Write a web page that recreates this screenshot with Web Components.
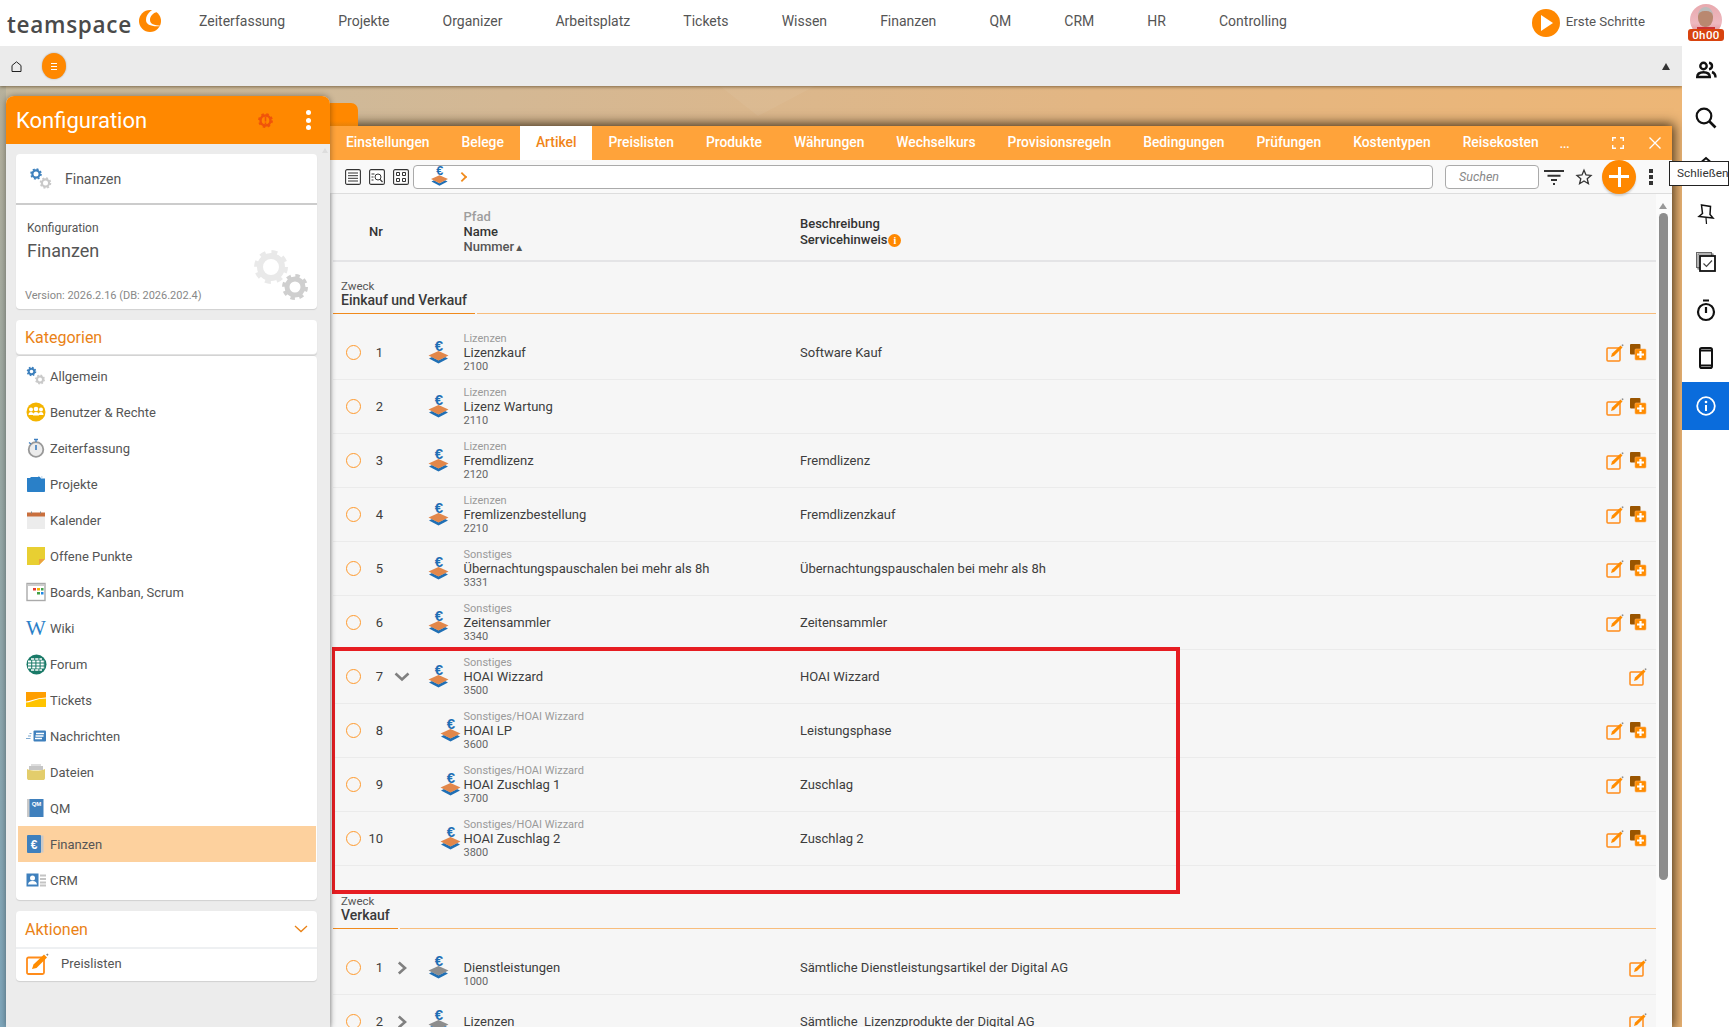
<!DOCTYPE html>
<html lang="de">
<head>
<meta charset="utf-8">
<title>teamspace</title>
<style>
html, body { margin: 0; height: 100%; overflow: hidden; background: #fff; font-family: Roboto, "Liberation Sans", sans-serif; }
</style>
</head>
<body>
<ts-app></ts-app>

<script>
// ring plus eight even teeth
const gear = (cx, cy, r, col, w) => {
  const R = r + w * 0.62, d = (2 * Math.PI * R / 16).toFixed(2);
  return `<circle cx="${cx}" cy="${cy}" r="${r}" fill="none" stroke="${col}" stroke-width="${w}"/>` +
    `<circle cx="${cx}" cy="${cy}" r="${R}" fill="none" stroke="${col}" stroke-width="${w * 0.75}" stroke-dasharray="${d} ${d}"/>`;
};
const euroStack = (mid) => `<text x="10.8" y="10" text-anchor="middle" font-family="Liberation Sans" font-weight="700" font-size="15" fill="#1f6fb5">€</text>
  <path d="M1 17.5l3-1.6 6.500 3.400 6.500-3.400 3 1.600-9.500 5z" fill="#1f6fb5"/>
  <path d="M.5 14.500l10-4.500 10 4.500-10 5z" fill="${mid}"/>`;

const ICONS = {
  euro: [21, 23, euroStack("#e2874a")],
  euroGrey: [21, 23, euroStack("#8d8d8d")],
  edit: [18, 18, `<rect x="1" y="4" width="13" height="13" rx="1" fill="none" stroke="#ff8c1a" stroke-width="1.500"/>
    <path d="M5 13l1-3.500L14.500 1.500l2 2L8 12z" fill="#ff8c00"/><path d="M15.300 1l1.500-.8.800.8-.8 1.500z" fill="#888"/>`],
  copy: [17, 16, `<rect x="0" y="0" width="10.500" height="10.500" rx="1" fill="#9a5500"/><rect x="5" y="5" width="11" height="11" rx="1" fill="#ff8c00" stroke="#ffb060" stroke-width=".6"/>
    <path d="M10.500 7v7M7 10.500h7" stroke="#fff" stroke-width="2.200"/>`],
  chevDown: [16, 10, `<path d="M1.500 1.500L8 7.500l6.500-6" fill="none" stroke="#808080" stroke-width="2.600"/>`],
  chevRight: [10, 14, `<path d="M1.800 1.500L8 7l-6.200 5.500" fill="none" stroke="#808080" stroke-width="2.600"/>`],
  gearsHead: [24, 24, gear(7, 7, 3.6, "#3d80bd", 2.2) + gear(16.5, 16, 3.6, "#c9c9c9", 2.2)],
  gearsCol: [20, 20, gear(5.5, 5.5, 2.8, "#3d80bd", 2) + gear(14, 13.5, 3, "#c9c9c9", 2)],
  gearsBig: [60, 56, gear(17, 20, 11, "#e9e9e9", 6) + gear(41, 40, 8, "#cfcfcf", 5)],
  warn: [17, 17, gear(8.5, 8.5, 5, "#f0540a", 2.4) + `<path d="M8.500 5v4.500M8.500 10.500v1.800" stroke="#f0540a" stroke-width="1.600"/>`],
  users: [20, 20, `<circle cx="10" cy="10" r="9.500" fill="#f4b400"/><g fill="#fff"><circle cx="5" cy="7.500" r="2"/><circle cx="15" cy="7.500" r="2"/><circle cx="10" cy="7" r="2.300"/><path d="M2.500 13c0-2 1-3 2.500-3s2.500 1 2.500 3zM12.500 13c0-2 1-3 2.500-3s2.500 1 2.500 3zM7 13.500c0-2.500 1.200-3.500 3-3.500s3 1 3 3.500z"/></g>`],
  watch: [20, 20, `<circle cx="10" cy="11.500" r="7.300" fill="#ececec" stroke="#999" stroke-width="1.800"/><path d="M10 7v5" stroke="#3f7fc0" stroke-width="1.600"/><path d="M8 1.500h4M10 1.500v2.500M3 4.500l2 1.500" stroke="#3f7fc0" stroke-width="1.300"/>`],
  folder: [20, 20, `<path d="M1 17V4h3l1-1h9l1 1.500h4V17c0 .6-.4 1-1 1H2c-.6 0-1-.4-1-1z" fill="#2a80c8"/><path d="M12 2.500h1.500M15 3h1.500" stroke="#a8c8e4"/>`],
  calendar: [20, 20, `<rect x="1" y="5" width="18" height="14" fill="#ececec"/><rect x="1" y="2.500" width="18" height="4" fill="#c96f3d"/><path d="M5.500 1.500v2M14.500 1.500v2" stroke="#888"/>`],
  note: [20, 20, `<path d="M1 1h18v12l-6 6H1z" fill="#e8cf32"/><path d="M13 19v-6h6z" fill="#eda240"/>`],
  board: [20, 20, `<rect x="1" y="1.500" width="18" height="17" fill="#fff" stroke="#aaa" stroke-width="1.400"/><rect x="1.500" y="2" width="17" height="2" fill="#ccc"/><rect x="7" y="6" width="3" height="2.500" fill="#e53935"/><rect x="11" y="6" width="3" height="2.500" fill="#f4b400"/><rect x="15" y="6" width="2.500" height="2.500" fill="#43a047"/><rect x="11" y="10" width="3" height="2.500" fill="#43a047"/><rect x="15" y="10" width="2.500" height="2.500" fill="#1e88e5"/>`],
  wiki: [20, 20, `<text x="10" y="16.500" text-anchor="middle" font-family="Liberation Serif" font-size="21" fill="#2a80c8">W</text>`],
  forum: [21, 21, `<circle cx="10.500" cy="10.500" r="10" fill="#1a7a68"/><path d="M2 7.500h17M2 13.500h17" stroke="#fff" stroke-width="1.800" stroke-dasharray="3.200 1"/><path d="M2 10.500h17" stroke="#fff" stroke-width="1.800" stroke-dasharray="3.200 1"/><path d="M5 5h11M5 16h11" stroke="#fff" stroke-width="1.500" stroke-dasharray="3.200 1"/>`],
  tickets: [20, 16, `<rect y="0" width="20" height="15" fill="#ff9e00"/><path d="M0 10c6 0 8-4 20-4v9H0z" fill="#ffc400"/><path d="M0 10c6 0 8-4 20-4" fill="none" stroke="#fff" stroke-width="1.200"/>`],
  news: [20, 12, `<rect x="7.500" y=".5" width="12.500" height="11" rx="1" fill="#3f80bd"/><path d="M10 3.500h8M9.500 6h8M9 8.500h7" stroke="#fff" stroke-width="1.300"/><path d="M3.500 3.500h2M2 6h3M0 8.500h4.500" stroke="#7fa9d0" stroke-width="1.200"/>`],
  files: [20, 18, `<path d="M3 3h14v4H3z" fill="#c6c6c6"/><path d="M5 1h10v2H5z" fill="#dedede"/><path d="M1 6c4 2 14 2 18 0v9c0 1.500-1 2-2 2H3c-1 0-2-.5-2-2z" fill="#e3cd6b"/>`],
  qm: [18, 20, `<rect x="1" y="1" width="4" height="18" fill="#c9c9c9"/><rect x="3.500" y="1" width="14" height="18" fill="#3f80bd"/><text x="10.500" y="8" text-anchor="middle" font-family="Liberation Sans" font-weight="700" font-size="6" fill="#fff">QM</text>`],
  fin: [18, 20, `<rect x="13" y="1.500" width="4.500" height="17" fill="#c9c9c9"/><rect x="1" y="1" width="14" height="18" rx="1" fill="#3f80bd"/><text x="8" y="14.500" text-anchor="middle" font-family="Liberation Sans" font-weight="700" font-size="12" fill="#fff">€</text>`],
  crm: [20, 14, `<rect x=".5" y=".5" width="12" height="13" fill="#3f80bd"/><circle cx="6.500" cy="5" r="2.500" fill="#fff"/><path d="M2 11.500c.5-3 2.500-3.500 4.500-3.500s4 .5 4.500 3.500z" fill="#fff"/><path d="M14 2.500h6M14 6h6M14 9.500h6M14 12.500h6" stroke="#c4c4c4" stroke-width="2"/>`],
  bigEdit: [24, 22, `<rect x="1" y="4.500" width="17" height="16.500" rx="1.500" fill="none" stroke="#ff8c1a" stroke-width="1.800"/><path d="M6 16l1.500-4.500L18 1.500l3 3L10.500 15z" fill="#ff8c00"/><path d="M20 1.500l1.500-1 1 1-1 1.500z" fill="#888"/>`],
  tList: [16, 16, `<rect x=".6" y=".6" width="14.800" height="14.800" rx="1.500" fill="#fff" stroke="#333" stroke-width="1.100"/><path d="M3 4h10M3 6.700h10M3 9.300h10M3 12h10" stroke="#333"/>`],
  tSearch: [16, 16, `<rect x=".6" y=".6" width="14.800" height="14.800" rx="1.500" fill="#fff" stroke="#333" stroke-width="1.100"/><path d="M2.500 5h3M2.500 8h2M2.500 11h2" stroke="#333"/><circle cx="9" cy="8" r="3" fill="none" stroke="#333"/><path d="M11 10.300l2.500 2.700" stroke="#333" stroke-width="1.200"/>`],
  tGrid: [16, 16, `<rect x=".6" y=".6" width="14.800" height="14.800" rx="1.500" fill="#fff" stroke="#333" stroke-width="1.100"/><path d="M3.500 3.500h3v3h-3zM9.500 3.500h3v3h-3zM3.500 9.500h3v3h-3zM9.500 9.500h3v3h-3z" fill="none" stroke="#333"/>`],
  filter: [20, 16, `<path d="M0 2h20M3.500 6.700h13M7 11h6" stroke="#333" stroke-width="2"/><path d="M9 15h2" stroke="#333" stroke-width="2"/>`],
  star: [16, 16, `<path d="M8 1.200l2 4.800 5 .4-3.800 3.300 1.200 5L8 12l-4.400 2.700 1.200-5L1 6.400 6 6z" fill="none" stroke="#333" stroke-width="1.300"/>`],
  fullscreen: [12, 12, `<path d="M.7 4V.7H4M8 .7h3.300V4M11.300 8v3.300H8M4 11.300H.7V8" fill="none" stroke="#fff" stroke-width="1.400"/>`],
  close: [12, 12, `<path d="M.5.5l11 11M11.500.5l-11 11" stroke="#fff" stroke-width="1.300"/>`],
  home: [11, 11, `<path d="M1 10.500V4.500L5.500.8 10 4.500v6z" fill="none" stroke="#222" stroke-width="1"/>`],
  logo: [24, 23, `<circle cx="12" cy="12" r="11" fill="#ff8800"/><path d="M17 0c-4 1-9 5-9 11 0 5 6 7 15 6-7-1-11-2-11-6 0-4 3-7 7-8l2-3z" fill="#fff"/>`],
  sPeople: [20, 18, `<circle cx="7.500" cy="5" r="3.200" fill="none" stroke="#111" stroke-width="2.400"/><path d="M1.200 16c0-3.500 3-4.800 6.300-4.800s6.300 1.300 6.300 4.800z" fill="none" stroke="#111" stroke-width="2.400"/><path d="M13 1.800c2 .3 3 1.700 3 3.200s-1 2.900-3 3.200M16 11c2 .7 3.500 2 3.500 5.500" fill="none" stroke="#111" stroke-width="2.400"/>`],
  sSearch: [22, 22, `<circle cx="9" cy="9" r="7.300" fill="none" stroke="#111" stroke-width="2.200"/><path d="M14.500 14.500l6 6" stroke="#111" stroke-width="2.600"/>`],
  sHome: [20, 20, `<path d="M2 18V9l8-7 8 7v9z" fill="none" stroke="#111" stroke-width="2"/>`],
  sPin: [16, 21, `<path d="M3.500 1l9 1.500-.5 8 3 3.500L1 12.500l3.500-3z" fill="none" stroke="#111" stroke-width="1.500"/><path d="M8 14l.5 6" stroke="#111" stroke-width="1.200"/>`],
  sCheck: [20, 20, `<rect x=".5" y=".5" width="15" height="15" fill="none" stroke="#666"/><rect x="2" y="2" width="15" height="15" fill="none" stroke="#666"/><rect x="4" y="4" width="15" height="15" fill="#fff" stroke="#111" stroke-width="1.800"/><path d="M7.500 11.500l3 3 5.500-6" fill="none" stroke="#444" stroke-width="1.200"/>`],
  sTimer: [20, 22, `<circle cx="10" cy="13" r="8" fill="none" stroke="#111" stroke-width="2.200"/><path d="M10 8v6M7 1.500h6" stroke="#111" stroke-width="2.200"/>`],
  sPhone: [14, 22, `<rect x="1" y="1" width="12" height="20" rx="1.800" fill="none" stroke="#111" stroke-width="2"/><path d="M1 3.500h12M1 18.500h12" stroke="#111" stroke-width="2"/>`],
  sInfo: [20, 20, `<circle cx="10" cy="10" r="8.800" fill="none" stroke="#fff" stroke-width="1.800"/><circle cx="10" cy="6" r="1.300" fill="#fff"/><path d="M10 9v6" stroke="#fff" stroke-width="2"/>`]
};

class TsIcon extends HTMLElement {
  connectedCallback() {
    if (this.shadowRoot) return;
    const [w, h, body] = ICONS[this.getAttribute("name")];
    this.attachShadow({ mode: "open" }).innerHTML =
      `<style>:host{display:inline-flex;flex:none}svg{display:block;overflow:visible}</style><svg width="${w}" height="${h}" viewBox="0 0 ${w} ${h}">${body}</svg>`;
  }
}

class TsTopbar extends HTMLElement {
  constructor() {
    super();
    const nav = ["Zeiterfassung", "Projekte", "Organizer", "Arbeitsplatz", "Tickets", "Wissen", "Finanzen", "QM", "CRM", "HR", "Controlling"];
    this.attachShadow({ mode: "open" }).innerHTML = `<style>
      :host { display: flex; align-items: center; height: 46px; background: #fff; color: #555; font-size: 14px; position: relative; z-index: 5; }
      .logo { display: flex; align-items: center; width: 199px; flex: none; padding-left: 7px; box-sizing: border-box; }
      .logo b { font: 600 22.500px "Open Sans", sans-serif; color: #4a4a4a; letter-spacing: .7px; margin-top: 2px; }
      .logo ts-icon { margin: -6px 0 0 6px; }
      nav { display: flex; gap: 53.050px; flex: none; margin-top: -4px; }
      .go { margin-left: auto; display: flex; align-items: center; gap: 6px; margin-right: 38px; font-size: 13.300px; }
      .play { width: 28px; height: 28px; background: #ff8800; border-radius: 50%; display: flex; align-items: center; justify-content: center; }
      .play i { border-left: 12px solid #fff; border-top: 8px solid transparent; border-bottom: 8px solid transparent; margin-left: 3px; }
      .go span { margin-top: -4px; }
      .go .play { margin-top: 0; }
      .me { width: 46px; flex: none; position: relative; height: 46px; }
      .face { position: absolute; left: 7px; top: 4px; width: 32px; height: 32px; border-radius: 50%; background: linear-gradient(180deg,#e8a9ae 0,#eeb8bf 60%,#d98a90 100%); overflow: hidden; }
      .face i { position: absolute; left: 8px; top: 3px; width: 15px; height: 20px; border-radius: 45%; background: #b98870; border-top: 4px solid #bbb; box-sizing: border-box; }
      .face u { position: absolute; left: 7px; bottom: 0; width: 18px; height: 9px; background: #c33; }
      .bad { position: absolute; left: 5px; top: 29px; width: 36px; height: 12px; background: #d8430f; color: #fff; font-size: 11.500px; font-weight: 500; line-height: 12px; text-align: center; border-radius: 3px; letter-spacing: .4px; }
    </style>
    <div class="logo"><b>teamspace</b><ts-icon name="logo"></ts-icon></div>
    <nav>${nav.map(n => `<span>${n}</span>`).join("")}</nav>
    <div class="go"><span class="play"><i></i></span><span>Erste Schritte</span></div>
    <div class="me"><div class="face"><i></i><u></u></div><div class="bad">0h00</div></div>`;
  }
}

class TsSubbar extends HTMLElement {
  constructor() {
    super();
    this.attachShadow({ mode: "open" }).innerHTML = `<style>
      :host { display: flex; align-items: center; height: 40px; background: #ebebeb; box-shadow: 0 1px 3px rgba(60,40,10,.55); position: relative; z-index: 1; flex: none; }
      ts-icon { margin-left: 11px; }
      .menu { margin-left: 20px; width: 24px; height: 26px; border-radius: 50%; background: #ff8800; box-shadow: 0 0 2px rgba(0,0,0,.3); display: flex; flex-direction: column; gap: 2px; align-items: center; justify-content: center; }
      .menu i { width: 6.500px; height: 1px; background: #fff; }
      .up { margin-left: auto; margin-right: 12px; border-left: 4px solid transparent; border-right: 4px solid transparent; border-bottom: 7px solid #333; }
    </style><ts-icon name="home"></ts-icon><div class="menu"><i></i><i></i><i></i></div><div class="up"></div>`;
  }
}

class TsRail extends HTMLElement {
  constructor() {
    super();
    const items = ["sPeople", "sSearch", "sHome", "sPin", "sCheck", "sTimer", "sPhone", "sInfo"];
    this.attachShadow({ mode: "open" }).innerHTML = `<style>
      :host { display: flex; flex-direction: column; width: 47px; flex: none; background: #fff; position: relative; z-index: 4; }
      div { height: 48px; display: flex; align-items: center; justify-content: center; }
      div:last-of-type { background: #0a6cdc; }
      .tip { position: absolute; left: -13px; top: 115px; width: 60px; height: 25px; box-sizing: border-box; background: #fff; border: 1px solid #222; font-size: 11.800px; color: #333; line-height: 23px; padding-left: 7px; white-space: nowrap; display: block; }
    </style>${items.map(n => `<div><ts-icon name="${n}"></ts-icon></div>`).join("")}<span class="tip">Schließen</span>`;
  }
}

class TsCategory extends HTMLElement {
  constructor() {
    super();
    this.attachShadow({ mode: "open" }).innerHTML = `<style>
      :host { display: flex; align-items: center; height: 36px; padding-left: 8px; font-size: 13px; color: #555; margin: 0 1px 0 2px; }
      :host([active]) { background: #fdd19e; }
      .ic { width: 24px; height: 24px; flex: none; display: flex; align-items: center; }
    </style><span class="ic"><ts-icon name="${this.getAttribute("icon")}"></ts-icon></span><slot></slot>`;
  }
}

class TsConfig extends HTMLElement {
  constructor() {
    super();
    this.attachShadow({ mode: "open" }).innerHTML = `<style>
      :host { display: block; width: 324px; flex: none; background: #ececec; position: relative; z-index: 3; margin-top: 10px; border-radius: 8px 8px 0 0; box-shadow: 0 0 6px rgba(0,0,0,.4); color: #555; }
      header { height: 48px; background: #ff8800; border-radius: 8px 8px 0 0; color: #fff; font-size: 22px; display: flex; align-items: center; padding-left: 10px; }
      header ts-icon { margin-left: auto; margin-right: 32px; }
      .dots { display: flex; flex-direction: column; gap: 2.500px; margin-right: 19px; }
      .dots i { width: 5px; height: 5px; background: #fff; border-radius: 50%; }
      .scrolly { position: absolute; left: 316px; top: 52px; border-left: 3px solid transparent; border-right: 3px solid transparent; border-bottom: 5px solid #ddd; }
      .card { background: #fff; margin: 0 13px 0 10px; border-radius: 4px; box-shadow: 0 1px 1px rgba(0,0,0,.12); position: relative; }
      .c1 { margin-top: 10px; height: 155px; }
      .fin { height: 49px; border-bottom: 2px solid #ccc; display: flex; align-items: center; font-size: 14px; padding-left: 13px; gap: 12px; }
      .fin ts-icon { margin-top: 1px; }
      .k1 { position: absolute; left: 11px; top: 67px; font-size: 12px; color: #555; }
      .k2 { position: absolute; left: 11px; top: 86px; font-size: 18px; }
      .v { position: absolute; left: 9px; top: 135px; font-size: 11px; color: #888; }
      .big { position: absolute; left: 238px; top: 93px; }
      .c2 { margin-top: 11px; height: 35px; font-size: 16px; color: #ea8216; display: flex; align-items: center; padding-left: 9px; border-bottom: 1px solid #e2e2e2; box-sizing: border-box; }
      .c3 { margin-top: 1px; height: 544px; padding-top: 2px; box-sizing: border-box; }
      .c4 { margin-top: 11px; height: 70px; }
      .ah { height: 36px; font-size: 16px; color: #ea8216; display: flex; align-items: center; justify-content: space-between; padding: 0 9px; border-bottom: 2px solid #eef0f2; }
      .ai { display: flex; align-items: center; font-size: 13px; height: 29px; padding-left: 10px; gap: 11px; }
    </style>
    <header>Konfiguration<ts-icon name="warn"></ts-icon><span class="dots"><i></i><i></i><i></i></span></header>
    <div class="scrolly"></div>
    <div class="card c1">
      <div class="fin"><ts-icon name="gearsHead"></ts-icon>Finanzen</div>
      <div class="k1">Konfiguration</div><div class="k2">Finanzen</div>
      <div class="v">Version: 2026.2.16 (DB: 2026.202.4)</div>
      <ts-icon class="big" name="gearsBig"></ts-icon>
    </div>
    <div class="card c2">Kategorien</div>
    <div class="card c3"><slot></slot></div>
    <div class="card c4">
      <div class="ah">Aktionen<svg width="14" height="8" viewBox="0 0 14 8"><path d="M1 1l6 5.500L13 1" fill="none" stroke="#ea8216" stroke-width="1.300"/></svg></div>
      <div class="ai"><ts-icon name="bigEdit"></ts-icon><span>Preislisten</span></div>
    </div>`;
  }
}

class TsSection extends HTMLElement {
  constructor() {
    super();
    this.attachShadow({ mode: "open" }).innerHTML = `<style>
      :host { display: block; padding-bottom: 10px; }
      .head { display: flex; padding-top: 18px; margin-bottom: 12px; }
      :host(:first-child) .head { padding-top: 17px; }
      .lab { padding: 0 8px 6px 8px; border-bottom: 1px solid #f08a1c; }
      .z { font-size: 11.500px; line-height: 14px; color: #555; }
      .t { font-size: 14px; line-height: 14px; font-weight: 500; color: #3a3a3a; white-space: nowrap; }
      .fill { flex: 1; margin-left: 2px; border-bottom: 1px solid #f8bd7c; }
    </style>
    <div class="head"><div class="lab"><div class="z">Zweck</div><div class="t"></div></div><div class="fill"></div></div>
    <slot></slot>`;
    this.shadowRoot.querySelector(".t").textContent = this.getAttribute("title");
  }
}

class TsRow extends HTMLElement {
  constructor() {
    super();
    const a = n => this.getAttribute(n) || "";
    const chev = a("chev") ? `<ts-icon name="${a("chev") === "down" ? "chevDown" : "chevRight"}"></ts-icon>` : "";
    const noCopy = this.hasAttribute("nocopy");
    this.attachShadow({ mode: "open" }).innerHTML = `<style>
      :host { display: grid; grid-template-columns: 16px 38px 14px 50.500px 336.500px 1fr auto; height: 54px; box-sizing: border-box; padding: 0 8px 0 12px; align-items: center; border-bottom: 1px solid #ebebeb; font-size: 13px; color: #3d3d3d; }
      .radio { width: 15px; height: 15px; box-sizing: border-box; border: 1.500px solid #ff9a2e; border-radius: 50%; margin-left: .5px; }
      .nr { text-align: right; padding-right: 16px; }
      .ch { display: flex; justify-content: center; margin-left: ${a("chev") === "down" ? "-8px" : "-9px"}; }
      .ic { padding-left: ${this.hasAttribute("sub") ? 27 : 15}px; display: flex; }
      .txt { line-height: 14px; }
      .p { height: 14px; font-size: 11px; color: #9a9a9a; white-space: nowrap; }
      .n { height: 14px; white-space: nowrap; }
      .c { height: 14px; font-size: 11px; color: #666; }
      .acts { display: flex; gap: 6px; align-items: center; margin-top: 1px; margin-right: ${noCopy ? 1 : 1}px; }
      .acts ts-icon[name=copy] { margin-top: -2px; }
    </style>
    <span class="radio"></span><span class="nr">${a("nr")}</span><span class="ch">${chev}</span>
    <span class="ic"><ts-icon name="${a("grey") ? "euroGrey" : "euro"}"></ts-icon></span>
    <div class="txt"><div class="p"><slot name="path"></slot></div><div class="n"><slot name="name"></slot></div><div class="c"><slot name="num"></slot></div></div>
    <div><slot name="desc"></slot></div>
    <div class="acts"><ts-icon name="edit"></ts-icon>${noCopy ? "" : '<ts-icon name="copy"></ts-icon>'}</div>`;
  }
}

class TsWindow extends HTMLElement {
  constructor() {
    super();
    const tabs = ["Einstellungen", "Belege", "Artikel", "Preislisten", "Produkte", "Währungen", "Wechselkurs", "Provisionsregeln", "Bedingungen", "Prüfungen", "Kostentypen", "Reisekosten"];
    this.attachShadow({ mode: "open" }).innerHTML = `<style>
      :host { display: flex; flex-direction: column; flex: 1; min-width: 0; margin-top: 40px; background: #f6f6f6; position: relative; z-index: 2; box-shadow: 0 0 11px 2px rgba(40,25,5,.85); }
      .behind { position: absolute; left: -6px; top: -23px; width: 34px; height: 30px; background: linear-gradient(#ff8800 60%,#c87a16); border-radius: 0 7px 0 0; z-index: -1; }
      .tabs { display: flex; height: 34px; background: #ffa33a; flex: none; font-size: 13.830px; font-weight: 500; color: #fff; align-items: stretch; }
      .tabs span { padding: 0 16px 2px; display: flex; align-items: center; }
      .tabs span.on { background: #fff; color: #f08518; }
      .tabs span.more { padding-left: 5px; padding-top: 3px; font-size: 12px; }
      .tabs .ws { margin-left: auto; display: flex; align-items: center; gap: 25px; padding-right: 11px; }
      .bar { display: flex; align-items: center; height: 34px; flex: none; box-sizing: border-box; background: #f9f9f9; border-bottom: 1px solid #ddd; padding: 0 0 0 15px; position: relative; z-index: 1; }
      .bar .t { margin-right: 8px; }
      .path { margin-left: -4px; width: 1020px; height: 24px; box-sizing: border-box; flex: none; background: #fff; border: 1px solid #aaa; border-radius: 4px; display: flex; align-items: center; padding-left: 15px; }
      .path ts-icon { transform: scale(.85); }
      .path i { margin-left: 8px; width: 6px; height: 6px; border-top: 2px solid #f08a1c; border-right: 2px solid #f08a1c; transform: rotate(45deg) scale(.9); }
      .srch { margin-left: 12px; width: 94px; height: 24px; box-sizing: border-box; background: #fff; border: 1px solid #aaa; border-radius: 4px; font-size: 12.500px; font-style: italic; color: #888; line-height: 22px; padding-left: 13px; flex: none; }
      .bar ts-icon[name=filter] { margin-left: 5px; }
      .bar ts-icon[name=star] { margin-left: 12px; }
      .plus { width: 34px; height: 34px; margin-left: 10px; border-radius: 50%; background: #ff8800; box-shadow: 0 2px 2px rgba(0,0,0,.15); position: relative; flex: none; }
      .plus::before, .plus::after { content: ""; position: absolute; background: #fff; }
      .plus::before { left: 7px; right: 7px; top: 15.500px; height: 3px; }
      .plus::after { top: 7px; bottom: 7px; left: 15.500px; width: 3px; }
      .vd { display: flex; flex-direction: column; gap: 2px; margin-left: 13px; }
      .vd i { width: 4px; height: 4px; background: #333; }
      .body { flex: 1; display: flex; min-height: 0; position: relative; }
      .list { flex: 1; min-width: 0; overflow: hidden; padding-left: 3px; background: linear-gradient(90deg,#d8d8d8,#f6f6f6 3px) 0 0/3px 100% no-repeat; }
      .head { display: grid; grid-template-columns: 94.500px 336.500px 1fr; height: 68px; box-sizing: border-box; align-items: center; padding: 9px 0 0 36px; border-bottom: 2px solid #e4e4e6; font-size: 13px; font-weight: 500; color: #333; }
      .head > div { line-height: 15px; }
      .head .g { color: #9e9e9e; } .head .m { color: #555; }
      .head .d { line-height: 16px; }
      .head small { font-size: 10px; }
      .hint { display: inline-block; width: 13px; height: 13px; border-radius: 50%; background: #ff8800; color: #fff; font: 700 10px/13px "Liberation Serif", serif; text-align: center; margin-left: 1px; }
      .sb { width: 16px; flex: none; background: #fbfbfb; position: relative; }
      .sb i { position: absolute; left: 3px; top: 19px; width: 9px; height: 667px; background: #8c8c8c; border-radius: 5px; }
      .sb b { position: absolute; left: 3px; top: 9px; border-left: 4.500px solid transparent; border-right: 4.500px solid transparent; border-bottom: 6px solid #999; }
      .red { position: absolute; left: 2px; top: 521px; width: 848px; height: 247px; box-sizing: border-box; border: 4px solid #e61d22; border-left-width: 3px; pointer-events: none; z-index: 2; }
    </style>
    <div class="behind"></div>
    <div class="tabs">${tabs.map(t => `<span class="${t === "Artikel" ? "on" : ""}">${t}</span>`).join("")}<span class="more">...</span><div class="ws"><ts-icon name="fullscreen"></ts-icon><ts-icon name="close"></ts-icon></div></div>
    <div class="bar">
      <ts-icon class="t" name="tList"></ts-icon><ts-icon class="t" name="tSearch"></ts-icon><ts-icon class="t" name="tGrid"></ts-icon>
      <div class="path"><ts-icon name="euro"></ts-icon><i></i></div>
      <div class="srch">Suchen</div>
      <ts-icon name="filter"></ts-icon><ts-icon name="star"></ts-icon>
      <div class="plus"></div>
      <div class="vd"><i></i><i></i><i></i></div>
    </div>
    <div class="body">
      <div class="list">
        <div class="head">
          <div>Nr</div>
          <div><div class="g">Pfad</div><div>Name</div><div class="m">Nummer<small>▲</small></div></div>
          <div class="d"><div>Beschreibung</div><div>Servicehinweis<span class="hint">i</span></div></div>
        </div>
        <slot></slot>
      </div>
      <div class="sb"><b></b><i></i></div>
    </div>
    <div class="red"></div>`;
  }
}

class TsApp extends HTMLElement {
  constructor() {
    super();
    this.attachShadow({ mode: "open" }).innerHTML = `<style>
      :host { display: flex; flex-direction: column; width: 1729px; height: 1027px; overflow: hidden; position: relative; }
      .mid { flex: 1; display: flex; min-height: 0; }
      .main { flex: 1; min-width: 0; display: flex; flex-direction: column; }
      .stage { flex: 1; min-height: 0; display: flex; padding: 0 10px 0 6px; position: relative; background:
        linear-gradient(180deg,#b7b19c 0,#9aa9a5 40%,#7ea6bb 100%) 0 0/6px 100% no-repeat,
        linear-gradient(90deg,#c6bba1 0,#d4b894 30%,#e3b683 65%,#edb676 100%); }
      .facet { position: absolute; left: 720px; top: 0; width: 95px; height: 30px; background: rgba(255,255,255,.05); clip-path: polygon(0 0,100% 0,40% 100%); }
    </style>
    <ts-topbar></ts-topbar>
    <div class="mid">
      <div class="main">
        <ts-subbar></ts-subbar>
        <div class="stage"><div class="facet"></div><slot></slot></div>
      </div>
      <ts-rail></ts-rail>
    </div>`;
    this.innerHTML = `
    <ts-config>
      <ts-category icon="gearsCol">Allgemein</ts-category>
      <ts-category icon="users">Benutzer &amp; Rechte</ts-category>
      <ts-category icon="watch">Zeiterfassung</ts-category>
      <ts-category icon="folder">Projekte</ts-category>
      <ts-category icon="calendar">Kalender</ts-category>
      <ts-category icon="note">Offene Punkte</ts-category>
      <ts-category icon="board">Boards, Kanban, Scrum</ts-category>
      <ts-category icon="wiki">Wiki</ts-category>
      <ts-category icon="forum">Forum</ts-category>
      <ts-category icon="tickets">Tickets</ts-category>
      <ts-category icon="news">Nachrichten</ts-category>
      <ts-category icon="files">Dateien</ts-category>
      <ts-category icon="qm">QM</ts-category>
      <ts-category icon="fin" active>Finanzen</ts-category>
      <ts-category icon="crm">CRM</ts-category>
    </ts-config>
    <ts-window><ts-section title="Einkauf und Verkauf">
        ${[
          [1, "Lizenzen", "Lizenzkauf", 2100, "Software Kauf"],
          [2, "Lizenzen", "Lizenz Wartung", 2110, ""],
          [3, "Lizenzen", "Fremdlizenz", 2120, "Fremdlizenz"],
          [4, "Lizenzen", "Fremlizenzbestellung", 2210, "Fremdlizenzkauf"],
          [5, "Sonstiges", "Übernachtungspauschalen bei mehr als 8h", 3331, "Übernachtungspauschalen bei mehr als 8h"],
          [6, "Sonstiges", "Zeitensammler", 3340, "Zeitensammler"],
          [7, "Sonstiges", "HOAI Wizzard", 3500, "HOAI Wizzard", 'chev="down" nocopy'],
          [8, "Sonstiges/HOAI Wizzard", "HOAI LP", 3600, "Leistungsphase", "sub"],
          [9, "Sonstiges/HOAI Wizzard", "HOAI Zuschlag 1", 3700, "Zuschlag", "sub"],
          [10, "Sonstiges/HOAI Wizzard", "HOAI Zuschlag 2", 3800, "Zuschlag 2", "sub"]
        ].map(r => row(...r)).join("")}
      </ts-section>
      <ts-section title="Verkauf">
        ${row(1, "", "Dienstleistungen", 1000, "Sämtliche Dienstleistungsartikel der Digital AG", 'chev="right" nocopy grey="1"')}
        ${row(2, "", "Lizenzen", "", "Sämtliche&nbsp; Lizenzprodukte der Digital AG", 'chev="right" nocopy grey="1"')}
      </ts-section>
    </ts-window>`;
  }
}

function row(nr, path, name, num, desc, extra = "") {
  return `<ts-row nr="${nr}" ${extra}><span slot="path">${path}</span><span slot="name">${name}</span><span slot="num">${num}</span><span slot="desc">${desc}</span></ts-row>`;
}

customElements.define("ts-icon", TsIcon);
customElements.define("ts-topbar", TsTopbar);
customElements.define("ts-subbar", TsSubbar);
customElements.define("ts-rail", TsRail);
customElements.define("ts-category", TsCategory);
customElements.define("ts-config", TsConfig);
customElements.define("ts-section", TsSection);
customElements.define("ts-row", TsRow);
customElements.define("ts-window", TsWindow);
customElements.define("ts-app", TsApp);
</script>
</body>
</html>
